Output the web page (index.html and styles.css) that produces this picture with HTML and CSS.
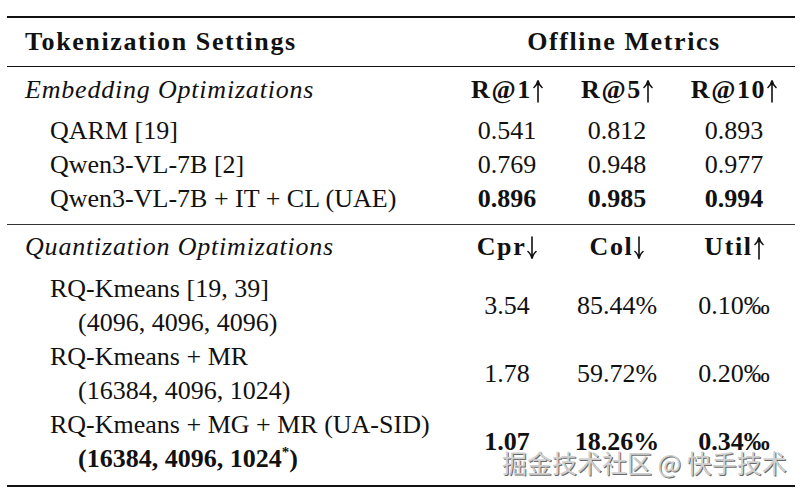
FILE: index.html
```html
<!DOCTYPE html>
<html>
<head>
<meta charset="utf-8">
<link rel="stylesheet" href="styles.css">
</head>
<body>
<div class="page">
  <table class="tbl">
    <colgroup>
      <col class="c-name">
      <col class="c-m1">
      <col class="c-m2">
      <col class="c-m3">
    </colgroup>
    <thead>
      <tr class="head-row">
        <th class="name bh">Tokenization Settings</th>
        <th colspan="3" class="num bh">Offline Metrics</th>
      </tr>
    </thead>
    <tbody class="group">
      <tr class="sub-head">
        <td class="name"><em class="it">Embedding Optimizations</em></td>
        <td class="num b bh">R@1<svg class="arr" viewBox="0 0 10 24"><path d="M5 2.5V23M1 8.5Q4 6 5 1.5Q6 6 9 8.5"/></svg></td>
        <td class="num b bh">R@5<svg class="arr" viewBox="0 0 10 24"><path d="M5 2.5V23M1 8.5Q4 6 5 1.5Q6 6 9 8.5"/></svg></td>
        <td class="num b bh">R@10<svg class="arr" viewBox="0 0 10 24"><path d="M5 2.5V23M1 8.5Q4 6 5 1.5Q6 6 9 8.5"/></svg></td>
      </tr>
      <tr>
        <td class="name ind1">QARM [19]</td>
        <td class="num">0.541</td>
        <td class="num">0.812</td>
        <td class="num">0.893</td>
      </tr>
      <tr>
        <td class="name ind1">Qwen3-VL-7B [2]</td>
        <td class="num">0.769</td>
        <td class="num">0.948</td>
        <td class="num">0.977</td>
      </tr>
      <tr class="last">
        <td class="name ind1">Qwen3-VL-7B + IT + CL (UAE)</td>
        <td class="num b">0.896</td>
        <td class="num b">0.985</td>
        <td class="num b">0.994</td>
      </tr>
    </tbody>
    <tbody class="group second">
      <tr class="sub-head">
        <td class="name"><em class="it">Quantization Optimizations</em></td>
        <td class="num b bh">Cpr<svg class="arr" viewBox="0 0 10 24"><path d="M5 1V21.5M1 15.5Q4 18 5 22.5Q6 18 9 15.5"/></svg></td>
        <td class="num b bh">Col<svg class="arr" viewBox="0 0 10 24"><path d="M5 1V21.5M1 15.5Q4 18 5 22.5Q6 18 9 15.5"/></svg></td>
        <td class="num b bh">Util<svg class="arr" viewBox="0 0 10 24"><path d="M5 2.5V23M1 8.5Q4 6 5 1.5Q6 6 9 8.5"/></svg></td>
      </tr>
      <tr>
        <td class="name ind1"><div>RQ-Kmeans [19, 39]</div><div class="ind2">(4096, 4096, 4096)</div></td>
        <td class="num">3.54</td>
        <td class="num">85.44%</td>
        <td class="num">0.10‰</td>
      </tr>
      <tr>
        <td class="name ind1"><div>RQ-Kmeans + MR</div><div class="ind2">(16384, 4096, 1024)</div></td>
        <td class="num">1.78</td>
        <td class="num">59.72%</td>
        <td class="num">0.20‰</td>
      </tr>
      <tr class="last">
        <td class="name ind1"><div>RQ-Kmeans + MG + MR (UA-SID)</div><div class="ind2 b">(16384, 4096, 1024<sup>*</sup>)</div></td>
        <td class="num b">1.07</td>
        <td class="num b">18.26%</td>
        <td class="num b">0.34‰</td>
      </tr>
    </tbody>
  </table>
  <div class="watermark">掘金技术社区 @ 快手技术</div>
</div>
</body>
</html>
```

FILE: styles.css
```css
html, body {
  margin: 0;
  padding: 0;
  background: #fff;
}
.page {
  position: relative;
  width: 804px;
  height: 494px;
  padding-top: 16px;
  box-sizing: border-box;
  font-family: "Liberation Serif", "Times New Roman", serif;
  font-size: 26px;
  color: #111;
}
.tbl {
  margin-left: 7px;
  width: 788px;
  table-layout: fixed;
  border-collapse: collapse;
  border-top: 2px solid #111;
  border-bottom: 2px solid #111;
}
.c-name { width: 446px; }
.c-m1 { width: 108px; }
.c-m2 { width: 112px; }
.c-m3 { width: 122px; }
th, td {
  padding: 0;
  line-height: 34px;
  vertical-align: middle;
  font-weight: normal;
  white-space: nowrap;
}
.head-row th {
  font-weight: bold;
  height: 48px;
  border-bottom: 1px solid #111;
}
.name {
  text-align: left;
  padding-left: 18px;
}
.ind1 { padding-left: 43px; }
.ind2 { padding-left: 28px; }
.num { text-align: center; }
.b { font-weight: bold; }
.bh { letter-spacing: 1.6px; }
.it { letter-spacing: 0.8px; }
.arr {
  width: 10px;
  height: 24px;
  vertical-align: -5px;
  margin-left: 1px;
  fill: none;
  stroke: #111;
  stroke-width: 1.6;
  stroke-linecap: round;
}
.group .sub-head td {
  padding-top: 6px;
  padding-bottom: 7px;
}
.group .last td {
  padding-bottom: 8px;
}
.second {
  border-top: 1.5px solid #333;
}
.second .sub-head td {
  padding-top: 5px;
  padding-bottom: 8px;
}
.second .last td {
  padding-bottom: 9px;
}
sup {
  font-size: 15px;
  line-height: 0;
  vertical-align: 10px;
}
.watermark {
  position: absolute;
  left: 502px;
  top: 447px;
  font-family: "Noto Sans CJK SC", sans-serif;
  font-size: 25px;
  line-height: 30px;
  color: #cfcfcf;
  text-shadow: 1px 1px 0 #6a6a6a, -1px -1px 0 #fff;
  white-space: nowrap;
}
```
